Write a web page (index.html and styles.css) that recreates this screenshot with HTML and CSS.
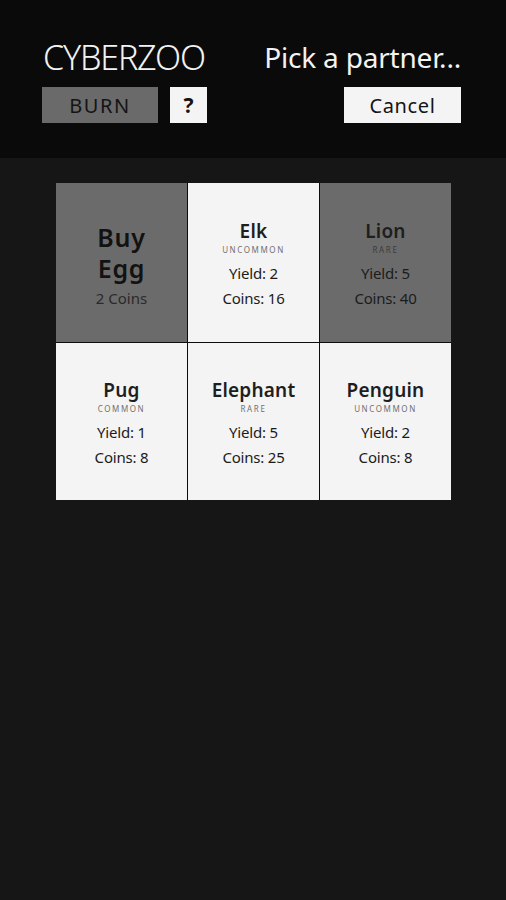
FILE: index.html
```html
<!DOCTYPE html>
<html>
<head>
<meta charset="utf-8">
<link rel="stylesheet" href="styles.css">
</head>
<body>
<header class="top">
  <div class="left">
    <h1 class="logo">CYBERZOO</h1>
    <div class="btnrow">
      <button class="btn burn">BURN</button>
      <button class="btn help">?</button>
    </div>
  </div>
  <div class="right">
    <div class="prompt">Pick a partner...</div>
    <button class="btn cancel">Cancel</button>
  </div>
</header>
<main class="board">
  <div class="grid">
    <div class="cell gray egg">
      <div class="big">Buy<br>Egg</div>
      <div class="price">2 Coins</div>
    </div>
    <div class="cell light">
      <div class="name">Elk</div>
      <div class="rarity">UNCOMMON</div>
      <div class="stat">Yield: 2</div>
      <div class="stat">Coins: 16</div>
    </div>
    <div class="cell gray">
      <div class="name">Lion</div>
      <div class="rarity">RARE</div>
      <div class="stat">Yield: 5</div>
      <div class="stat">Coins: 40</div>
    </div>
    <div class="cell light">
      <div class="name">Pug</div>
      <div class="rarity">COMMON</div>
      <div class="stat">Yield: 1</div>
      <div class="stat">Coins: 8</div>
    </div>
    <div class="cell light">
      <div class="name">Elephant</div>
      <div class="rarity">RARE</div>
      <div class="stat">Yield: 5</div>
      <div class="stat">Coins: 25</div>
    </div>
    <div class="cell light">
      <div class="name">Penguin</div>
      <div class="rarity">UNCOMMON</div>
      <div class="stat">Yield: 2</div>
      <div class="stat">Coins: 8</div>
    </div>
  </div>
</main>
</body>
</html>
```
FILE: styles.css
```css
* { box-sizing: border-box; }
html, body {
  margin: 0;
  padding: 0;
  height: 100%;
}
body {
  background: #161616;
  font-family: "Noto Sans", "Liberation Sans", sans-serif;
  color: #111;
}
.top {
  height: 158px;
  background: #0a0a0a;
  display: flex;
  justify-content: space-between;
  padding: 38px 45px 0 42px;
  white-space: nowrap;
}
.left, .right {
  display: flex;
  flex-direction: column;
}
.right { align-items: flex-end; }
.logo {
  margin: 0 0 10px 1px;
  font-size: 34px;
  font-weight: 300;
  color: #f2f2f2;
  line-height: 39px;
  letter-spacing: -1.2px;
}
.prompt {
  font-size: 28px;
  font-weight: 400;
  color: #f2f2f2;
  line-height: 39px;
  margin-bottom: 10px;
  letter-spacing: -0.2px;
}
.btnrow {
  display: flex;
  gap: 12px;
}
.btn {
  height: 36px;
  border: none;
  font-family: inherit;
  font-size: 20px;
  padding: 0;
  color: #141414;
}
.burn {
  width: 116px;
  background: #6a6a6a;
  letter-spacing: 1.5px;
}
.help {
  width: 37px;
  background: #f4f4f4;
  font-weight: bold;
  font-size: 21px;
}
.cancel {
  width: 117px;
  background: #f4f4f4;
  letter-spacing: 0.6px;
}
.board {
  padding: 25px 0 0 56px;
}
.grid {
  display: grid;
  grid-template-columns: repeat(3, 131px);
  grid-template-rows: 159px 157px;
  gap: 1px;
  background: #0c0c0c;
  width: max-content;
}
.cell {
  display: flex;
  flex-direction: column;
  align-items: center;
  justify-content: center;
  text-align: center;
  padding-top: 4px;
}
.gray { background: #6b6b6b; }
.light { background: #f4f4f4; }
.name {
  font-size: 19px;
  font-weight: 600;
  line-height: 26px;
  letter-spacing: 0.2px;
  color: #1e1e1e;
}
.rarity {
  font-size: 8px;
  letter-spacing: 1.6px;
  color: #707070;
  line-height: 11px;
  margin-bottom: 6px;
}
.gray .rarity { color: #3c3c3c; }
.stat {
  font-size: 15px;
  line-height: 25px;
  color: #1b1b1b;
  letter-spacing: -0.2px;
}
.big {
  font-size: 25px;
  line-height: 31px;
  font-weight: 600;
  letter-spacing: 0.8px;
  color: #121212;
}
.price {
  font-size: 15px;
  color: #2a2a2a;
  margin-top: 4px;
}
.egg { padding: 4px 0 0; }
```
